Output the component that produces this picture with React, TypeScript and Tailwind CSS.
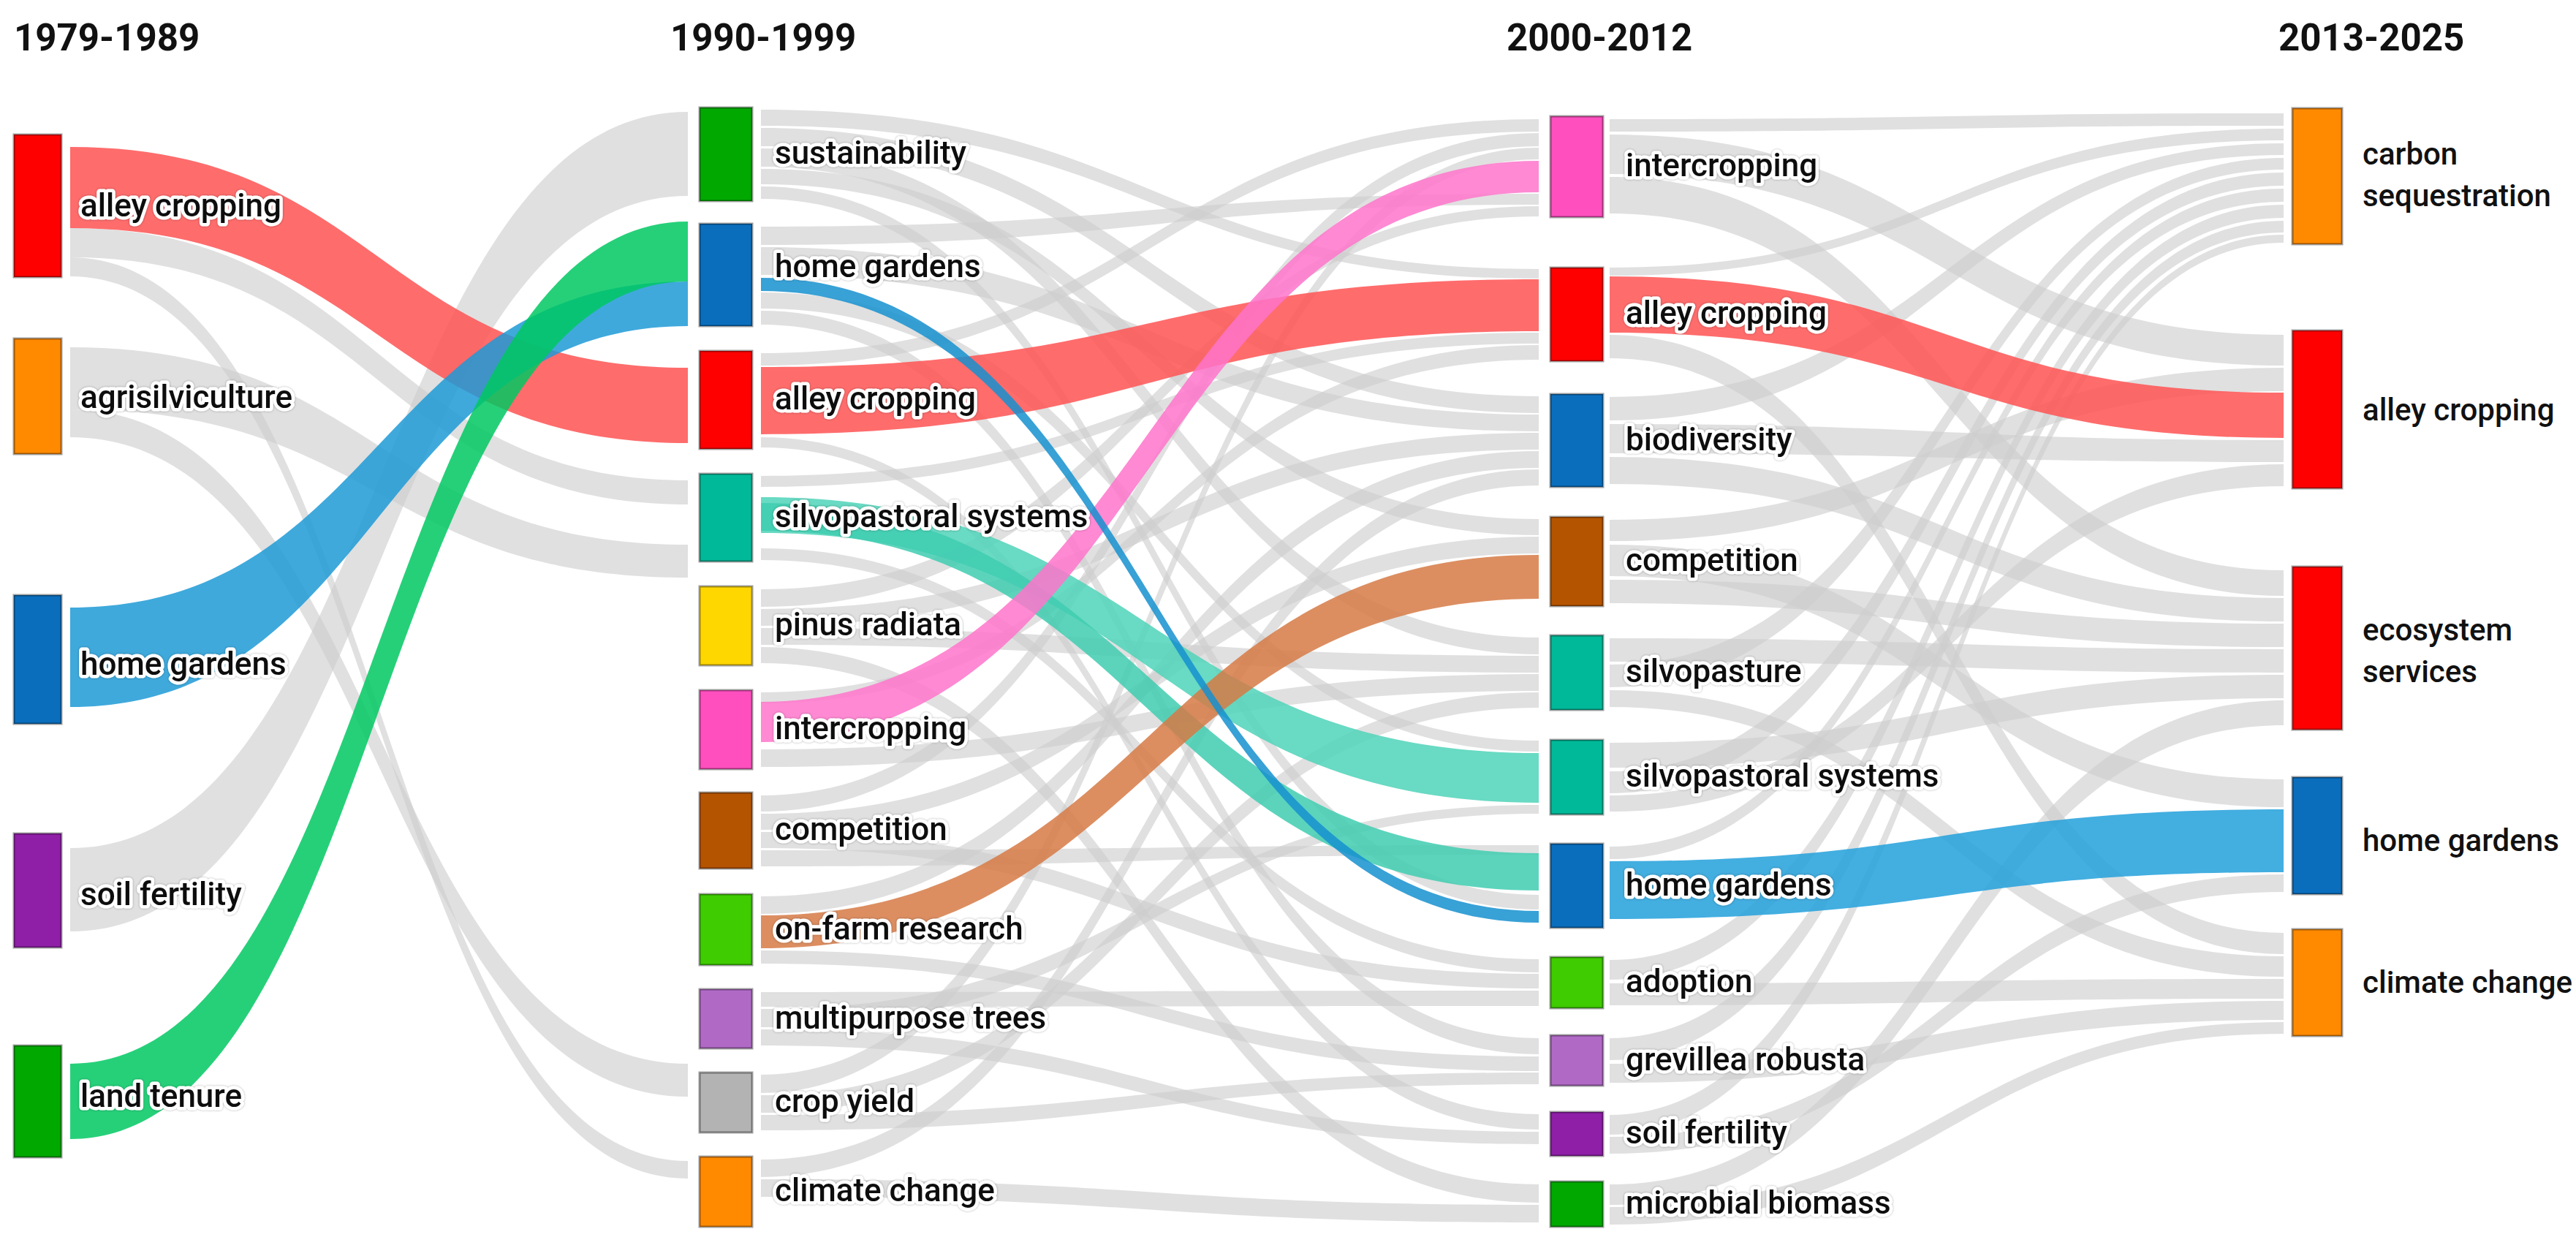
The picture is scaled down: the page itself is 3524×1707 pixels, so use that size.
import React from 'react';

type Node = { label: string[]; y0: number; y1: number; color: string; ly?: number[] };
type Link = [number, number, number, number, number];

const COLS = [
  { x: 19, w: 65, out: 96, inn: 0, font: 44, halo: true, labelX: 110 },
  { x: 957, w: 72, out: 1041, inn: 941, font: 44, halo: true, labelX: 1060 },
  { x: 2121, w: 72, out: 2202, inn: 2105, font: 44, halo: true, labelX: 2224 },
  { x: 3136, w: 68, out: 0, inn: 3124, font: 42, halo: false, labelX: 3232 },
];

const RED = '#ff0000';
const ORANGE = '#ff8a00';
const BLUE = '#0a6ebd';
const PURPLE = '#8e1fa6';
const GREEN = '#00a800';
const TEAL = '#00b999';
const PINK = '#ff4fbf';
const BROWN = '#b55400';
const LIME = '#3fcc00';
const LAVENDER = '#b06ac6';

const nodes: Node[][] = [
  [
    { label: ['alley cropping'], y0: 184, y1: 379, color: RED, ly: [281] },
    { label: ['agrisilviculture'], y0: 463, y1: 621, color: ORANGE, ly: [543] },
    { label: ['home gardens'], y0: 814, y1: 990, color: BLUE, ly: [908] },
    { label: ['soil fertility'], y0: 1140, y1: 1296, color: PURPLE, ly: [1223] },
    { label: ['land tenure'], y0: 1430, y1: 1583, color: GREEN, ly: [1499] },
  ],
  [
    { label: ['sustainability'], y0: 147, y1: 275, color: GREEN },
    { label: ['home gardens'], y0: 306, y1: 446, color: BLUE, ly: [364] },
    { label: ['alley cropping'], y0: 480, y1: 614, color: RED },
    { label: ['silvopastoral systems'], y0: 648, y1: 768, color: TEAL },
    { label: ['pinus radiata'], y0: 802, y1: 910, color: '#ffd700' },
    { label: ['intercropping'], y0: 944, y1: 1052, color: PINK },
    { label: ['competition'], y0: 1084, y1: 1188, color: BROWN },
    { label: ['on-farm research'], y0: 1223, y1: 1320, color: LIME },
    { label: ['multipurpose trees'], y0: 1353, y1: 1434, color: LAVENDER },
    { label: ['crop yield'], y0: 1467, y1: 1549, color: '#b3b3b3' },
    { label: ['climate change'], y0: 1582, y1: 1678, color: ORANGE },
  ],
  [
    { label: ['intercropping'], y0: 159, y1: 297, color: PINK },
    { label: ['alley cropping'], y0: 366, y1: 494, color: RED },
    { label: ['biodiversity'], y0: 539, y1: 666, color: BLUE },
    { label: ['competition'], y0: 707, y1: 829, color: BROWN },
    { label: ['silvopasture'], y0: 869, y1: 971, color: TEAL },
    { label: ['silvopastoral systems'], y0: 1012, y1: 1114, color: TEAL },
    { label: ['home gardens'], y0: 1154, y1: 1269, color: BLUE },
    { label: ['adoption'], y0: 1309, y1: 1379, color: LIME },
    { label: ['grevillea robusta'], y0: 1416, y1: 1485, color: LAVENDER },
    { label: ['soil fertility'], y0: 1521, y1: 1581, color: PURPLE },
    { label: ['microbial biomass'], y0: 1616, y1: 1678, color: GREEN },
  ],
  [
    { label: ['carbon', 'sequestration'], y0: 148, y1: 334, color: ORANGE, ly: [210, 267] },
    { label: ['alley cropping'], y0: 452, y1: 668, color: RED, ly: [560] },
    { label: ['ecosystem', 'services'], y0: 775, y1: 998, color: RED, ly: [861, 918] },
    { label: ['home gardens'], y0: 1063, y1: 1223, color: BLUE, ly: [1149] },
    { label: ['climate change'], y0: 1271, y1: 1417, color: ORANGE, ly: [1343] },
  ],
];

// [from column, source top, source bottom, target top, target bottom]
const grayLinks: Link[] = [
  [0, 312, 352, 657, 690],
  [0, 352, 378, 1588, 1612],
  [0, 475, 560, 745, 790],
  [0, 560, 598, 1455, 1500],
  [0, 1160, 1274, 153, 268],

  [1, 150, 172, 368, 381],
  [1, 175, 200, 542, 565],
  [1, 203, 228, 872, 895],
  [1, 231, 252, 710, 732],
  [1, 255, 272, 1224, 1244],
  [1, 310, 335, 265, 280],
  [1, 338, 376, 567, 590],
  [1, 400, 422, 1013, 1028],
  [1, 425, 444, 1420, 1442],
  [1, 483, 500, 163, 180],
  [1, 598, 612, 1524, 1545],
  [1, 651, 666, 455, 470],
  [1, 750, 766, 1312, 1330],
  [1, 806, 830, 282, 296],
  [1, 833, 856, 592, 615],
  [1, 859, 882, 897, 920],
  [1, 885, 907, 1620, 1645],
  [1, 947, 962, 472, 492],
  [1, 1025, 1049, 922, 945],
  [1, 1088, 1110, 182, 200],
  [1, 1113, 1135, 734, 757],
  [1, 1138, 1160, 1332, 1352],
  [1, 1163, 1185, 1156, 1169],
  [1, 1226, 1250, 617, 640],
  [1, 1300, 1318, 1445, 1465],
  [1, 1357, 1377, 1355, 1376],
  [1, 1380, 1405, 1101, 1113],
  [1, 1408, 1430, 1548, 1565],
  [1, 1470, 1495, 202, 218],
  [1, 1498, 1522, 947, 968],
  [1, 1525, 1546, 1467, 1483],
  [1, 1586, 1610, 642, 664],
  [1, 1613, 1637, 1648, 1672],

  [2, 163, 180, 155, 172],
  [2, 184, 238, 458, 500],
  [2, 242, 292, 780, 815],
  [2, 366, 377, 176, 192],
  [2, 458, 490, 1276, 1305],
  [2, 543, 575, 196, 212],
  [2, 580, 620, 602, 632],
  [2, 625, 662, 818, 850],
  [2, 711, 740, 503, 535],
  [2, 745, 788, 1066, 1104],
  [2, 793, 825, 853, 885],
  [2, 873, 905, 888, 920],
  [2, 909, 940, 216, 232],
  [2, 944, 967, 1308, 1336],
  [2, 1016, 1050, 923, 955],
  [2, 1055, 1085, 236, 254],
  [2, 1088, 1110, 635, 665],
  [2, 1158, 1175, 258, 276],
  [2, 1313, 1340, 280, 298],
  [2, 1345, 1375, 1339, 1366],
  [2, 1420, 1450, 302, 318],
  [2, 1455, 1481, 1369, 1395],
  [2, 1525, 1552, 321, 332],
  [2, 1555, 1578, 1196, 1220],
  [2, 1620, 1648, 958, 992],
  [2, 1651, 1675, 1398, 1414],
];

const colorLinks: (Link | string)[][] = [
  [[0, 201, 312, 503, 606], '#ff5252'],
  [[0, 831, 967, 385, 446], '#1d9ad6'],
  [[0, 1455, 1558, 303, 385], '#00c862'],
  [[1, 502, 594, 382, 453], '#ff5252'],
  [[1, 680, 729, 1030, 1098], '#4fd4b8'],
  [[1, 688, 726, 1167, 1218], '#3fcdb0'],
  [[1, 960, 1015, 220, 263], '#ff74cb'],
  [[1, 1252, 1297, 759, 819], '#d67a45'],
  [[1, 380, 398, 1246, 1262], '#1590cf'],
  [[2, 378, 455, 537, 599], '#ff5252'],
  [[2, 1178, 1257, 1107, 1193], '#22a0da'],
];

function ribbon([c, a0, b0, a1, b1]: Link) {
  const x0 = COLS[c].out;
  const x1 = COLS[c + 1].inn;
  const m = (x0 + x1) / 2;
  return `M${x0},${a0} C${m},${a0} ${m},${a1} ${x1},${a1} L${x1},${b1} C${m},${b1} ${m},${b0} ${x0},${b0} Z`;
}

export default function App() {
  const headers = [
    { t: '1979-1989', x: 19 },
    { t: '1990-1999', x: 917 },
    { t: '2000-2012', x: 2061 },
    { t: '2013-2025', x: 3117 },
  ];

  return (
    <div className="w-[3524px] h-[1707px] bg-white overflow-hidden font-['Roboto',_'Liberation_Sans',_sans-serif]">
      <svg width={3524} height={1707} viewBox="0 0 3524 1707" className="block">
        <defs>
          <filter id="halo" x="-5%" y="-30%" width="110%" height="160%">
            <feDropShadow dx="0" dy="0" stdDeviation="1.6" floodColor="#000" floodOpacity="0.35" />
          </filter>
        </defs>

        {headers.map((h) => (
          <text key={h.t} x={h.x} y={69} fontSize={51} fontWeight={700} fill="#111">
            {h.t}
          </text>
        ))}

        {/* gray flows */}
        <g fill="#cdcdcd" fillOpacity={0.62}>
          {grayLinks.map((l, i) => (
            <path key={i} d={ribbon(l)} />
          ))}
        </g>

        {/* highlighted flows */}
        {colorLinks.map(([l, color], i) => (
          <path key={i} d={ribbon(l as Link)} fill={color as string} fillOpacity={0.85} />
        ))}

        {/* nodes */}
        {nodes.map((col, ci) =>
          col.map((n) => (
            <rect
              key={ci + n.label.join()}
              x={COLS[ci].x}
              y={n.y0}
              width={COLS[ci].w}
              height={n.y1 - n.y0}
              fill={n.color}
              stroke="rgba(0,0,0,0.38)"
              strokeWidth={3}
            />
          ))
        )}

        {/* labels */}
        {nodes.map((col, ci) =>
          col.map((n) => {
            const c = COLS[ci];
            const ys = n.ly ?? [(n.y0 + n.y1) / 2 - 2];
            return n.label.map((line, li) => (
              <text
                key={ci + line}
                x={c.labelX}
                y={ys[li]}
                dominantBaseline="central"
                fontSize={c.font}
                fontWeight={500}
                fill="#111"
                stroke={c.halo ? '#fff' : 'none'}
                strokeWidth={c.halo ? 9 : 0}
                strokeLinejoin="round"
                paintOrder="stroke"
                filter={c.halo ? 'url(#halo)' : undefined}
              >
                {line}
              </text>
            ));
          })
        )}
      </svg>
    </div>
  );
}
